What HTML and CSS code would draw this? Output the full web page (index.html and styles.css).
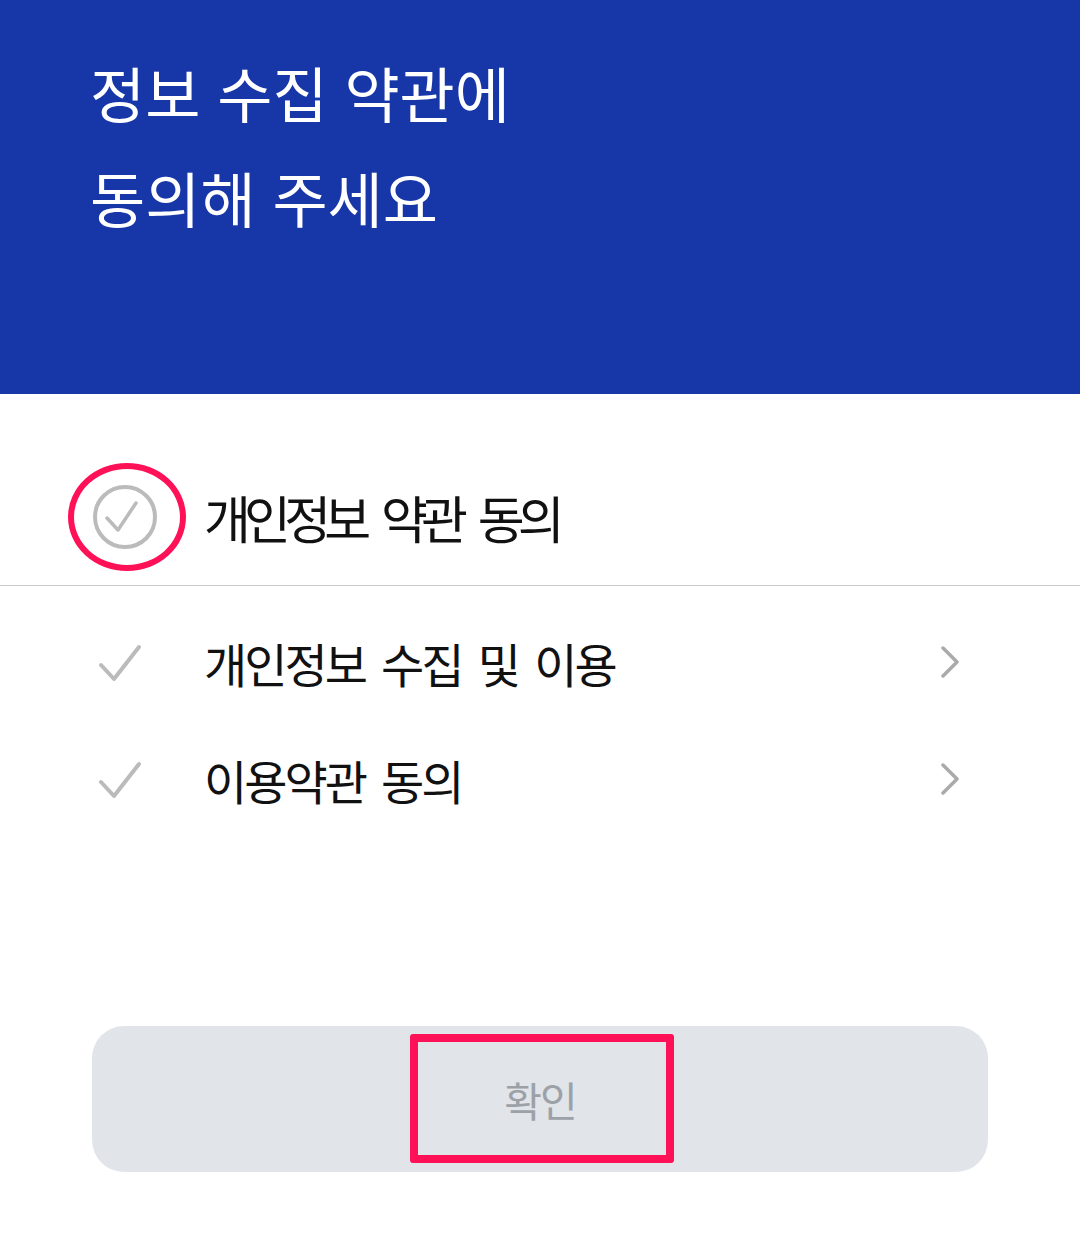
FILE: index.html
```html
<!DOCTYPE html>
<html lang="ko">
<head>
  <meta charset="UTF-8">
  <title>약관 동의</title>
  <link rel="stylesheet" href="styles.css">
</head>
<body>

<div class="header">
  <h1>정보 수집 약관에<br>동의해 주세요</h1>
</div>

<div class="agree-all">
  <span class="all-icon">
    <svg width="66" height="66" viewBox="0 0 66 66">
      <circle cx="33" cy="33" r="30" fill="none" stroke="#bbbbbb" stroke-width="4"/>
      <polyline points="15,34 26,46 44,19" fill="none" stroke="#bbbbbb" stroke-width="3.5" stroke-linecap="round" stroke-linejoin="round"/>
    </svg>
  </span>
  <span class="all-text">개인정보 약관 동의</span>
</div>

<div class="terms">
  <div class="term-row">
    <svg class="check" width="44" height="38" viewBox="0 0 44 38">
      <polyline points="3,21 16,35 41,3" fill="none" stroke="#bbbbbb" stroke-width="4" stroke-linecap="round" stroke-linejoin="round"/>
    </svg>
    <span class="term-text">개인정보 수집 및 이용</span>
    <svg class="chevron" width="22" height="34" viewBox="0 0 22 34">
      <polyline points="4,2 18,16 4,30" fill="none" stroke="#aaaaaa" stroke-width="3.5" stroke-linecap="round" stroke-linejoin="round"/>
    </svg>
  </div>
  <div class="term-row">
    <svg class="check" width="44" height="38" viewBox="0 0 44 38">
      <polyline points="3,21 16,35 41,3" fill="none" stroke="#bbbbbb" stroke-width="4" stroke-linecap="round" stroke-linejoin="round"/>
    </svg>
    <span class="term-text">이용약관 동의</span>
    <svg class="chevron" width="22" height="34" viewBox="0 0 22 34">
      <polyline points="4,2 18,16 4,30" fill="none" stroke="#aaaaaa" stroke-width="3.5" stroke-linecap="round" stroke-linejoin="round"/>
    </svg>
  </div>
</div>

<button class="confirm-btn">
  <span class="confirm-mark"></span>
  확인
</button>

</body>
</html>
```

FILE: styles.css
```css
* { box-sizing: border-box; font-family: "Noto Sans CJK KR", "Noto Sans", sans-serif; }
body { margin: 0; background: white; }

.header {
  background: #1736a8;
  height: 394px;
  padding: 39px 0 0 90px;
}

.header h1 {
  margin: 0;
  color: white;
  font-size: 60px;
  font-weight: 400;
  line-height: 105px;
  letter-spacing: 0;
}

.agree-all {
  display: flex;
  align-items: center;
  gap: 18px;
  margin-top: 69px;
  padding: 0 0 14px 68px;
  border-bottom: 1px solid #cccccc;
}

.all-icon {
  width: 118px;
  height: 108px;
  border: 6px solid #ff1158;
  border-radius: 50%;
  display: flex;
  align-items: center;
  justify-content: center;
  padding-right: 4px;
}

.all-icon svg { display: block; }

.all-text {
  font-size: 51px;
  letter-spacing: -6.8px;
  word-spacing: 9px;
  color: #111;
}

.terms { padding-top: 18px; }

.term-row {
  display: flex;
  align-items: center;
  height: 117px;
  padding: 0 119px 0 98px;
}

.check { flex: none; }

.term-text {
  flex: 1;
  margin-left: 62px;
  font-size: 47px;
  letter-spacing: -3px;
  word-spacing: 6px;
  color: #111;
}

.chevron { flex: none; }

.confirm-btn {
  position: relative;
  display: flex;
  align-items: center;
  justify-content: center;
  width: 896px;
  height: 146px;
  margin: 188px 0 0 92px;
  border: none;
  border-radius: 32px;
  background: #e1e4e8;
  color: #9ca1a8;
  font-size: 41px;
  letter-spacing: -2px;
  padding: 0;
}

.confirm-mark {
  position: absolute;
  left: 318px;
  top: 8px;
  width: 264px;
  height: 129px;
  border: 8px solid #ff1158;
  border-radius: 3px;
}
```
